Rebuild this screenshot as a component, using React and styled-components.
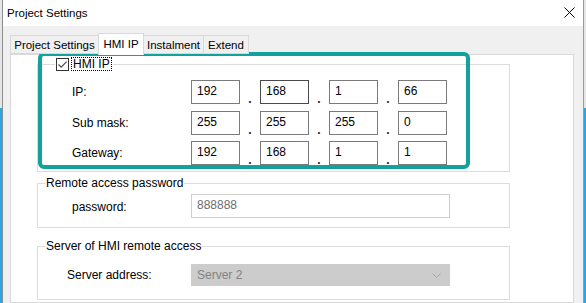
import React from 'react'
import styled, { createGlobalStyle } from 'styled-components'

const GlobalStyle = createGlobalStyle`
  html, body {
    margin: 0;
    padding: 0;
  }
  body {
    font-family: "Liberation Sans", Arial, sans-serif;
    font-size: 12px;
    color: #000;
  }
`

const Screen = styled.div`
  width: 586px;
  height: 303px;
  overflow: hidden;
  display: flex;
  padding-left: 2px;
  box-sizing: border-box;
  background: linear-gradient(to bottom, #e6e6e6 0, #e6e6e6 108px, #27a8e4 108px);
`

const Dialog = styled.div`
  width: 582px;
  height: 303px;
  box-sizing: border-box;
  border-left: 1px solid #8e8e8e;
  border-right: 1px solid #9a9a9a;
  display: flex;
  flex-direction: column;
  background: #f0f0f0;
`

const TitleBar = styled.div`
  height: 26px;
  flex: none;
  background: #fff;
  display: flex;
  align-items: center;
  justify-content: space-between;
  padding: 0 8px 0 4px;
`

const Title = styled.span`
  font-size: 11.5px;
  line-height: 16px;
  margin-top: -1px;
`

const CloseButton = styled.div`
  width: 11px;
  height: 11px;
  display: flex;
  margin-top: -1px;
`

const Body = styled.div`
  flex: 1;
  padding: 7px 9px 0 7px;
  display: flex;
  flex-direction: column;
`

const TabStrip = styled.div`
  display: flex;
  align-items: flex-end;
  height: 21px;
  padding-left: 1px;
  position: relative;
  z-index: 1;
`

const Tab = styled.div`
  width: ${p => p.$w}px;
  height: ${p => (p.$active ? 22 : 19)}px;
  margin-bottom: ${p => (p.$active ? -1 : 0)}px;
  margin-left: -1px;
  box-sizing: border-box;
  border: 1px solid #d9d9d9;
  border-bottom: ${p => (p.$active ? 'none' : '1px solid #d9d9d9')};
  background: ${p => (p.$active ? '#fff' : '#f0f0f0')};
  display: flex;
  align-items: center;
  justify-content: center;
  padding-bottom: ${p => (p.$active ? 2 : 0)}px;
  font-size: 11.5px;
  line-height: 14px;
  white-space: nowrap;
`

const TabPanel = styled.div`
  flex: 1;
  background: #fff;
  border: 1px solid #d9d9d9;
  padding: 1px 0 0 26px;
  display: flex;
  flex-direction: column;
  align-items: flex-start;
  position: relative;
`

const Group = styled.fieldset`
  width: 473px;
  box-sizing: border-box;
  margin: ${p => p.$top}px 0 0 0;
  padding: 0;
  border: 1px solid #dcdcdc;
  min-width: 0;
`

const Legend = styled.legend`
  margin-left: ${p => p.$indent}px;
  padding: 0 1px;
  height: ${p => p.$h}px;
  line-height: ${p => p.$h}px;
  display: flex;
  align-items: center;
  gap: 2px;
`

const CheckBox = styled.span`
  width: 13px;
  height: 13px;
  box-sizing: border-box;
  border: 1px solid #333;
  background: #fff;
  display: flex;
`

const FocusLabel = styled.span`
  border: 1px dotted #000;
  padding: 0 1px;
  line-height: 12px;
  height: 14px;
  box-sizing: border-box;
`

const GroupContent = styled.div`
  padding: ${p => p.$pad};
  display: flex;
  flex-direction: column;
  gap: 6.5px;
`

const Row = styled.div`
  display: flex;
  align-items: center;
`

const Label = styled.span`
  width: ${p => p.$w}px;
  flex: none;
  line-height: 14px;
  margin-top: ${p => p.$nudge || 0}px;
`

const Octet = styled.div`
  width: 49px;
  height: 24px;
  box-sizing: border-box;
  border: 1px solid ${p => (p.$focus ? '#4a4a4a' : '#7a7a7a')};
  padding: 3px 0 0 5px;
  line-height: 14px;
  font-size: 12px;
`

const Dot = styled.span`
  width: 20px;
  align-self: flex-end;
  text-align: center;
  font-weight: bold;
  line-height: 14px;
  margin-bottom: -2px;
  color: #222;
`

const TextBox = styled.div`
  width: 259px;
  height: ${p => p.$h}px;
  box-sizing: border-box;
  border: 1px solid ${p => (p.$disabled ? '#cccccc' : '#cfcfcf')};
  background: ${p => (p.$disabled ? '#cccccc' : '#fff')};
  color: ${p => (p.$disabled ? '#838383' : '#6d6d6d')};
  padding: 0 8px 0 5px;
  display: flex;
  align-items: ${p => (p.$disabled ? 'center' : 'flex-start')};
  padding-top: ${p => (p.$disabled ? 0 : 3)}px;
  justify-content: space-between;
  line-height: 14px;
`

const Highlight = styled.div`
  position: absolute;
  left: 27px;
  top: -3px;
  width: 432px;
  height: 117px;
  box-sizing: border-box;
  border: 4px solid #13a29b;
  border-radius: 6px;
  pointer-events: none;
`

const ipRows = [
  { label: 'IP:', values: ['192', '168', '1', '66'], focus: 1 },
  { label: 'Sub mask:', values: ['255', '255', '255', '0'] },
  { label: 'Gateway:', values: ['192', '168', '1', '1'] },
]

const tabs = [
  { name: 'Project Settings', w: 89 },
  { name: 'HMI IP', w: 46, active: true },
  { name: 'Instalment', w: 61 },
  { name: 'Extend', w: 46 },
]

export default function App() {
  return (
    <>
      <GlobalStyle />
      <Screen>
        <Dialog>
          <TitleBar>
            <Title>Project Settings</Title>
            <CloseButton>
              <svg width="11" height="11" viewBox="0 0 11 11">
                <path d="M0.5 0.5 L10.5 10.5 M10.5 0.5 L0.5 10.5" stroke="#000" strokeWidth="1" fill="none" />
              </svg>
            </CloseButton>
          </TitleBar>
          <Body>
            <TabStrip>
              {tabs.map(t => (
                <Tab key={t.name} $w={t.w} $active={t.active}>{t.name}</Tab>
              ))}
            </TabStrip>
            <TabPanel>
              <Group $top={1}>
                <Legend $indent={17} $h={14}>
                  <CheckBox>
                    <svg width="11" height="11" viewBox="0 0 11 11">
                      <path d="M1.5 5.5 L4.2 8.2 L9.6 2.6" stroke="#4a4a4a" strokeWidth="1.2" fill="none" />
                    </svg>
                  </CheckBox>
                  <FocusLabel>HMI IP</FocusLabel>
                </Legend>
                <GroupContent $pad="9px 0 6px 34px">
                  {ipRows.map(r => (
                    <Row key={r.label}>
                      <Label $w={119}>{r.label}</Label>
                      {r.values.map((v, i) => (
                        <React.Fragment key={i}>
                          {i > 0 && <Dot>.</Dot>}
                          <Octet $focus={r.focus === i}>{v}</Octet>
                        </React.Fragment>
                      ))}
                    </Row>
                  ))}
                </GroupContent>
              </Group>

              <Group $top={3}>
                <Legend $indent={7} $h={16}>Remote access password</Legend>
                <GroupContent $pad="3px 0 9px 34px">
                  <Row>
                    <Label $w={119} $nudge={2}>password:</Label>
                    <TextBox $h={24}>888888</TextBox>
                  </Row>
                </GroupContent>
              </Group>

              <Group $top={10}>
                <Legend $indent={7} $h={16}>Server of HMI remote access</Legend>
                <GroupContent $pad="10px 0 13px 29px">
                  <Row>
                    <Label $w={124}>Server address:</Label>
                    <TextBox $h={22} $disabled>
                      <span>Server 2</span>
                      <svg width="9" height="5" viewBox="0 0 9 5">
                        <path d="M0.5 0.5 L4.5 4.5 L8.5 0.5" stroke="#a8a8a8" strokeWidth="1" fill="none" />
                      </svg>
                    </TextBox>
                  </Row>
                </GroupContent>
              </Group>

              <Highlight />
            </TabPanel>
          </Body>
        </Dialog>
      </Screen>
    </>
  )
}
